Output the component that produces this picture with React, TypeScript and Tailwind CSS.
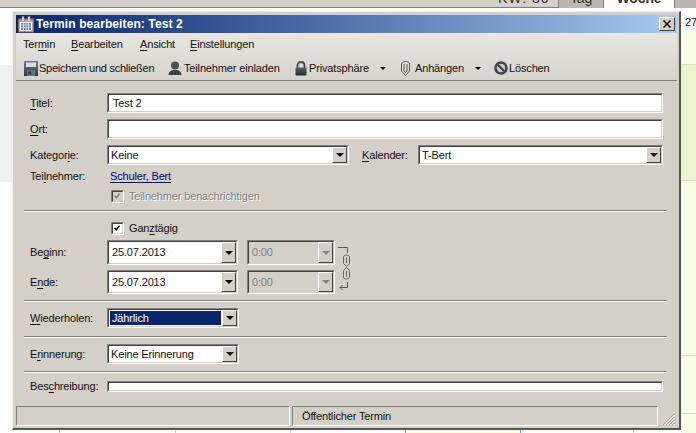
import React from 'react';

const font = "font-['Liberation_Sans',Arial,sans-serif]";

function Sunken({ className, children }: { className: string; children?: React.ReactNode }) {
  return (
    <div className={`border border-t-[#808080] border-l-[#808080] border-r-white border-b-white ${className}`}>
      <div className="h-full w-full border border-t-[#404040] border-l-[#404040] border-r-[#d4d0c8] border-b-[#d4d0c8] flex items-center bg-white">
        {children}
      </div>
    </div>
  );
}

function Arrow({ disabled }: { disabled?: boolean }) {
  return (
    <div className="w-[15px] h-full shrink-0 bg-[#d4d0c8] border border-t-white border-l-white border-r-[#404040] border-b-[#404040] flex items-center justify-center">
      <div className={`w-0 h-0 border-x-[4px] border-x-transparent border-t-[4px] ${disabled ? 'border-t-[#808080]' : 'border-t-black'}`} />
    </div>
  );
}

function Combo({ className, text, disabled, selected, wide }: { className: string; text: string; disabled?: boolean; selected?: boolean; wide?: boolean }) {
  return (
    <Sunken className={className}>
      <div className={`flex-1 h-full flex items-center ${disabled ? 'bg-[#d4d0c8] text-[#808080]' : 'bg-white'}`}>
        {selected ? (
          <div className="mx-[1px] my-[1px] flex-1 self-stretch bg-[#0a246a] text-white flex items-center pl-[2px]">{text}</div>
        ) : (
          <span className={wide ? 'pl-[3px]' : 'pl-[2px]'}>{text}</span>
        )}
      </div>
      <Arrow disabled={disabled} />
    </Sunken>
  );
}

function Label({ before, u, after }: { before?: string; u: string; after: string }) {
  return (
    <div className="w-[77px] shrink-0 whitespace-nowrap">
      {before}
      <span className="underline underline-offset-2">{u}</span>
      {after}
    </div>
  );
}

function Separator({ className }: { className: string }) {
  return <div className={`ml-[8px] w-[643px] h-[2px] border-t border-t-[#808080] border-b border-b-white ${className}`} />;
}

function CheckBox({ disabled }: { disabled?: boolean }) {
  return (
    <div className={`w-[13px] h-[13px] shrink-0 border border-t-[#808080] border-l-[#808080] border-r-white border-b-white ${disabled ? 'bg-[#d4d0c8]' : 'bg-white'}`}>
      <svg viewBox="0 0 11 11" className="w-[11px] h-[11px] border border-t-[#404040] border-l-[#404040] border-r-[#d4d0c8] border-b-[#d4d0c8]">
        <path d="M2 4.5 L4 7 L8 2" fill="none" stroke={disabled ? '#808080' : '#000'} strokeWidth="1.8" />
      </svg>
    </div>
  );
}

function CalendarIcon() {
  return (
    <svg width="17" height="17" viewBox="0 0 17 17" className="shrink-0">
      <rect x="0.5" y="3" width="15" height="13" fill="#c9a58a" stroke="#8a6a55" />
      <rect x="2" y="6" width="12" height="9" fill="#f4f6fb" />
      <rect x="3" y="7" width="10" height="7" fill="#6d84bd" />
      <path d="M3 9h10M3 11.5h10M5.5 7v7M8 7v7M10.5 7v7" stroke="#dfe5f3" strokeWidth="0.7" />
      <rect x="4" y="0.5" width="2" height="5" fill="#e8e8e8" stroke="#777" strokeWidth="0.5" />
      <rect x="10" y="0.5" width="2" height="5" fill="#e8e8e8" stroke="#777" strokeWidth="0.5" />
    </svg>
  );
}

function SaveIcon() {
  return (
    <svg width="14" height="15" viewBox="0 0 14 15" className="shrink-0">
      <defs>
        <linearGradient id="sv" x1="0" y1="0" x2="0" y2="1">
          <stop offset="0" stopColor="#6a7d8c" />
          <stop offset="1" stopColor="#2e3a44" />
        </linearGradient>
      </defs>
      <rect x="0" y="0" width="14" height="15" rx="0.5" fill="url(#sv)" />
      <rect x="2" y="1.5" width="10" height="4.5" fill="#d9dee2" />
      <rect x="3" y="9" width="8" height="6" fill="#5d7484" />
      <rect x="4.5" y="10.5" width="2.5" height="3" fill="#26323b" />
    </svg>
  );
}

function PersonIcon() {
  return (
    <svg width="14" height="15" viewBox="0 0 14 15" className="shrink-0">
      <circle cx="7" cy="4.5" r="4" fill="#4b5257" />
      <path d="M0.5 14 C0.5 10 3.5 9 7 9 C10.5 9 13.5 10 13.5 14 Z" fill="#3c4247" />
    </svg>
  );
}

function LockIcon() {
  return (
    <svg width="12" height="15" viewBox="0 0 12 15" className="shrink-0">
      <defs>
        <linearGradient id="lk" x1="0" y1="0" x2="0" y2="1">
          <stop offset="0" stopColor="#5b646b" />
          <stop offset="1" stopColor="#22292e" />
        </linearGradient>
      </defs>
      <path d="M2.5 7 V4.5 C2.5 2.2 4 1 6 1 C8 1 9.5 2.2 9.5 4.5 V7" fill="none" stroke="#41494f" strokeWidth="1.8" />
      <rect x="0.5" y="6.5" width="11" height="8" rx="1" fill="url(#lk)" />
    </svg>
  );
}

function ClipIcon() {
  return (
    <svg width="9" height="15" viewBox="0 0 9 15" className="shrink-0">
      <path d="M0.5 3 C0.5 -0.3 8.5 -0.3 8.5 3 V10 L4.5 14.5 L0.5 10 Z" fill="none" stroke="#555c61" />
      <path d="M3 3 V10 L4.5 11.5 L6 10 V3" fill="none" stroke="#555c61" />
    </svg>
  );
}

function DeleteIcon() {
  return (
    <svg width="14" height="14" viewBox="0 0 14 14" className="shrink-0">
      <circle cx="7" cy="7" r="5.5" fill="#c8ccce" stroke="#3e474d" strokeWidth="2.6" />
      <path d="M3 3 L11 11" stroke="#3e474d" strokeWidth="2.4" />
    </svg>
  );
}

function ChainIcon() {
  return (
    <svg width="14" height="44" viewBox="0 0 14 44">
      <path d="M0 1.5 H9.5 V7" fill="none" stroke="#555" />
      <g fill="none" stroke="#5e676d">
        <path d="M5.5 11 C5.5 8.5 11.5 8.5 11.5 11 V17.5 L8.5 20.5 L5.5 17.5 Z" />
        <path d="M8.5 11.5 V17" />
        <path d="M5.5 31 C5.5 33.5 11.5 33.5 11.5 31 V24.5 L8.5 21.5 L5.5 24.5 Z" />
        <path d="M8.5 25 V30.5" />
      </g>
      <path d="M9.5 36 V41.5 H2 M4.5 39 L2 41.5 L4.5 44" fill="none" stroke="#555" />
    </svg>
  );
}

function SmallDrop() {
  return <div className="w-0 h-0 border-x-[3px] border-x-transparent border-t-[3px] border-t-black" />;
}

export default function App() {
  return (
    <div className={`relative w-[696px] h-[433px] overflow-hidden bg-white text-[11px] tracking-[-0.15px] leading-none text-[#111] ${font}`}>
      {/* calendar behind the dialog */}
      <div className="absolute inset-x-0 top-0 h-[8px] bg-[#d4d0c8] border-b border-b-[#808080]">
        <div className="absolute left-[498px] -top-[9px] text-[14px] leading-[14px] tracking-[1px] text-[#333]">KW: 30</div>
        <div className="absolute left-[558px] top-0 w-[46px] h-[8px] bg-[#bcb8b0] border-x border-x-[#808080]">
          <div className="text-[14px] leading-[14px] -mt-[9px] text-center text-[#333]">Tag</div>
        </div>
        <div className="absolute left-[604px] top-0 w-[70px] h-[8px] bg-white overflow-hidden">
          <div className="text-[14px] leading-[14px] -mt-[9px] text-center font-bold text-[#333]">Woche</div>
        </div>
        <div className="absolute left-[674px] top-0 w-[22px] h-[8px] bg-[#bcb8b0] border-l border-l-[#808080]" />
      </div>
      <div className="absolute left-0 top-[65px] w-[12px] h-[117px] bg-[#f0f0f0]" />
      <div className="absolute left-[681px] top-[32px] w-[15px] h-[401px] bg-[#f4ffe4]" />
      <div className="absolute left-[681px] top-[64px] w-[15px] h-[117px] bg-[#e8f5cd] border-y border-y-[#d8d8d0]" />
      <div className="absolute left-[681px] top-[355px] w-[15px] h-px bg-[#d8d8d0]" />
      <div className="absolute left-[681px] top-[413px] w-[15px] h-px bg-[#d8d8d0]" />
      <div className="absolute left-[685px] top-[16px] text-[11px] leading-[12px]">27</div>
      <div className="absolute left-[405px] top-[430px] w-[116px] h-[3px] bg-[#fdfde0] border-x border-x-[#5aa7dc]" />
      <div className="absolute left-[59px] top-[430px] w-px h-[3px] bg-[#d0d0d0]" />
      <div className="absolute left-[175px] top-[430px] w-px h-[3px] bg-[#d0d0d0]" />
      <div className="absolute left-[290px] top-[430px] w-px h-[3px] bg-[#d0d0d0]" />
      <div className="absolute left-[633px] top-[430px] w-px h-[3px] bg-[#d0d0d0]" />

      {/* dialog window */}
      <div className="absolute left-[12px] top-[11px] w-[669px] h-[419px] bg-[#d4d0c8] border-t border-l border-t-[#f2f0ec] border-l-[#f2f0ec] border-r-2 border-b-2 border-r-[#555] border-b-[#555] pt-[3px] pl-[3px] pr-[2px] flex flex-col">
        <div className="h-[18px] shrink-0 flex items-center bg-gradient-to-r from-[#0a246a] to-[#a6caf0] px-[2px]">
          <CalendarIcon />
          <div className="ml-[1px] font-bold text-white text-[12px] tracking-[0.1px]">Termin bearbeiten: Test 2</div>
          <div className="ml-auto w-[16px] h-[14px] bg-[#d4d0c8] border border-t-white border-l-white border-r-[#404040] border-b-[#404040] flex items-center justify-center">
            <svg width="8" height="8" viewBox="0 0 8 8">
              <path d="M0.5 0.5 L7.5 7.5 M7.5 0.5 L0.5 7.5" stroke="#000" strokeWidth="1.5" />
            </svg>
          </div>
        </div>

        <div className="h-[48px] shrink-0 bg-gradient-to-b from-[#e8e6e1] to-[#d6d3cc] border-b border-b-[#808080]">
          <div className="h-[22px] flex items-center pl-[7px]">
            <span className="w-[48px]">Ter<span className="underline underline-offset-2">m</span>in</span>
            <span className="w-[69px]"><span className="underline underline-offset-2">B</span>earbeiten</span>
            <span className="w-[50px]"><span className="underline underline-offset-2">A</span>nsicht</span>
            <span><span className="underline underline-offset-2">E</span>instellungen</span>
          </div>
          <div className="h-[26px] flex items-center pl-[8px]">
            <SaveIcon />
            <span className="ml-[1px] w-[129px] tracking-[-0.25px]">Speichern und schließen</span>
            <PersonIcon />
            <span className="ml-[2px] w-[111px]">Teilnehmer einladen</span>
            <LockIcon />
            <span className="ml-[2px] w-[71px]">Privatsphäre</span>
            <SmallDrop />
            <div className="ml-[15px]"><ClipIcon /></div>
            <span className="ml-[5px] w-[60px]">Anhängen</span>
            <SmallDrop />
            <div className="ml-[13px]"><DeleteIcon /></div>
            <span className="ml-[1px]">Löschen</span>
          </div>
        </div>

        <div className="flex-1 flex flex-col">
          <div className="mt-[12px] ml-[14px] flex items-center h-[20px]">
            <Label u="T" after="itel:" />
            <Sunken className="w-[556px] h-[20px]"><span className="pl-[4px]">Test 2</span></Sunken>
          </div>
          <div className="mt-[6px] ml-[14px] flex items-center h-[20px]">
            <Label u="O" after="rt:" />
            <Sunken className="w-[556px] h-[20px]" />
          </div>
          <div className="mt-[6px] ml-[14px] flex items-center h-[20px]">
            <Label before="Kategor" u="i" after="e:" />
            <Combo className="w-[242px] h-[20px]" text="Keine" />
            <div className="ml-[13px] w-[56px] whitespace-nowrap"><span className="underline underline-offset-2">K</span>alender:</div>
            <Combo className="w-[245px] h-[20px]" text="T-Bert" />
          </div>
          <div className="mt-[3px] ml-[14px] flex items-center h-[16px]">
            <Label before="Tei" u="l" after="nehmer:" />
            <span className="ml-[3px] text-[#00008b] underline underline-offset-2">Schuler, Bert</span>
          </div>
          <div className="mt-[4px] ml-[95px] flex items-center h-[16px] text-[#808080]">
            <CheckBox disabled />
            <span className="ml-[5px] [text-shadow:1px_1px_0_#fff]">Teilnehmer benachrichtigen</span>
          </div>
          <Separator className="mt-[6px]" />
          <div className="mt-[8px] ml-[95px] flex items-center h-[16px]">
            <CheckBox />
            <span className="ml-[5px]">Gan<span className="underline underline-offset-2">z</span>tägig</span>
          </div>
          <div className="mt-[4px] ml-[14px] flex items-center h-[25px]">
            <Label before="Be" u="g" after="inn:" />
            <Combo className="w-[131px] h-[25px]" text="25.07.2013" wide />
            <Combo className="ml-[9px] w-[88px] h-[25px]" text="0:00" disabled wide />
          </div>
          <div className="mt-[5px] ml-[14px] flex items-center h-[24px] relative">
            <Label before="E" u="n" after="de:" />
            <Combo className="w-[131px] h-[24px]" text="25.07.2013" wide />
            <Combo className="ml-[9px] w-[88px] h-[24px]" text="0:00" disabled wide />
            <div className="absolute left-[308px] -top-[24px]"><ChainIcon /></div>
          </div>
          <Separator className="mt-[6px]" />
          <div className="mt-[6px] ml-[14px] flex items-center h-[20px]">
            <Label u="W" after="iederholen:" />
            <Combo className="w-[132px] h-[20px]" text="Jährlich" selected />
          </div>
          <Separator className="mt-[8px]" />
          <div className="mt-[6px] ml-[14px] flex items-center h-[20px]">
            <Label before="E" u="r" after="innerung:" />
            <Combo className="w-[132px] h-[20px]" text="Keine Erinnerung" />
          </div>
          <Separator className="mt-[7px]" />
          <div className="mt-[8px] ml-[14px] flex items-center h-[11px]">
            <Label before="Bes" u="c" after="hreibung:" />
            <Sunken className="w-[556px] h-[11px]" />
          </div>
        </div>

        <div className="h-[20px] mb-[2px] shrink-0 flex">
          <div className="w-[274px] border border-t-[#808080] border-l-[#808080] border-r-white border-b-white" />
          <div className="ml-[2px] w-[366px] border border-t-[#808080] border-l-[#808080] border-r-white border-b-white flex items-center pl-[9px]">Öffentlicher Termin</div>
          <svg width="13" height="13" viewBox="0 0 13 13" className="ml-auto mr-[2px] self-end shrink-0">
            <path d="M12.5 1 L1 12.5 M12.5 4 L4 12.5 M12.5 7 L7 12.5 M12.5 10 L10 12.5" stroke="#808080" />
            <path d="M12.5 2 L2 12.5 M12.5 5 L5 12.5 M12.5 8 L8 12.5 M12.5 11 L11 12.5" stroke="#fff" />
          </svg>
        </div>
      </div>
    </div>
  );
}
